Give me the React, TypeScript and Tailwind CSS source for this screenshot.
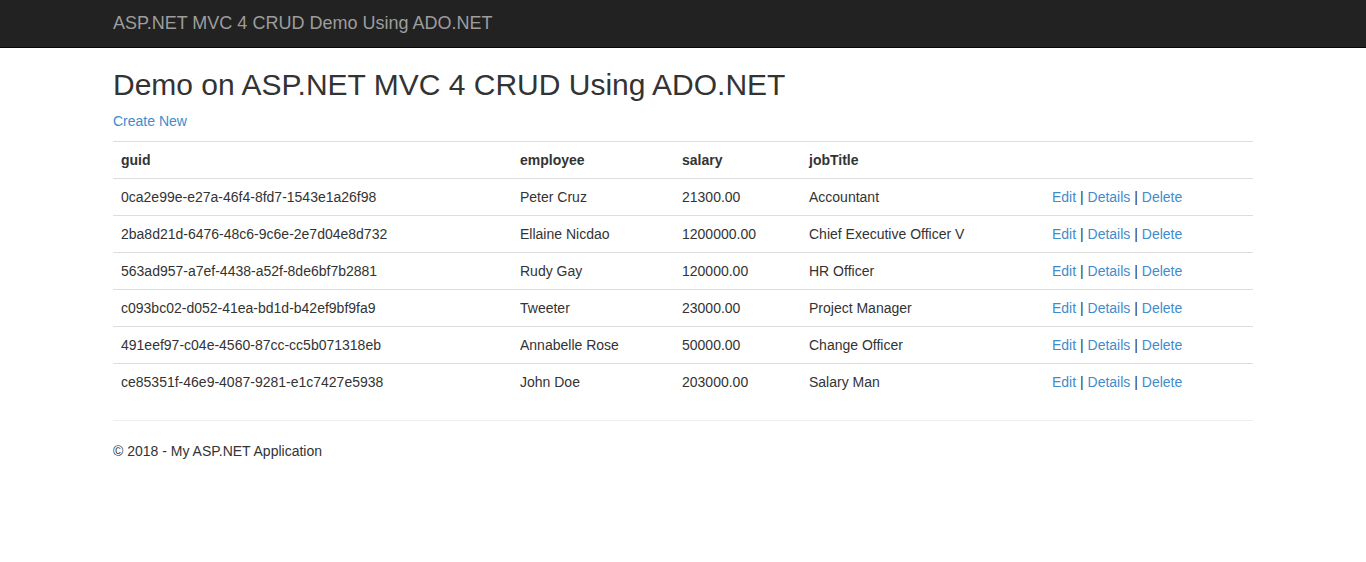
const employees = [
  { guid: "0ca2e99e-e27a-46f4-8fd7-1543e1a26f98", employee: "Peter Cruz", salary: "21300.00", jobTitle: "Accountant" },
  { guid: "2ba8d21d-6476-48c6-9c6e-2e7d04e8d732", employee: "Ellaine Nicdao", salary: "1200000.00", jobTitle: "Chief Executive Officer V" },
  { guid: "563ad957-a7ef-4438-a52f-8de6bf7b2881", employee: "Rudy Gay", salary: "120000.00", jobTitle: "HR Officer" },
  { guid: "c093bc02-d052-41ea-bd1d-b42ef9bf9fa9", employee: "Tweeter", salary: "23000.00", jobTitle: "Project Manager" },
  { guid: "491eef97-c04e-4560-87cc-cc5b071318eb", employee: "Annabelle Rose", salary: "50000.00", jobTitle: "Change Officer" },
  { guid: "ce85351f-46e9-4087-9281-e1c7427e5938", employee: "John Doe", salary: "203000.00", jobTitle: "Salary Man" },
];

export default function App() {
  return (
    <div className="min-h-screen bg-white text-[#333] text-[14px] leading-5 font-['Liberation_Sans',Arial,sans-serif]">
      {/* navbar */}
      <div className="h-12 bg-[#222] border-b border-[#080808]">
        <div className="w-[1170px] mx-auto px-[15px]">
          <a href="#" className="block pt-[13px] text-[18px] leading-5 text-[#9d9d9d]">
            ASP.NET MVC 4 CRUD Demo Using ADO.NET
          </a>
        </div>
      </div>

      <div className="w-[1170px] mx-auto px-[15px]">
        <h2 className="mt-5 mb-[10px] text-[30px] leading-[33px] font-medium">
          Demo on ASP.NET MVC 4 CRUD Using ADO.NET
        </h2>
        <p className="mb-[10px]">
          <a href="#" className="text-[#428bca]">Create New</a>
        </p>

        <table className="w-full border-collapse mb-5 text-left">
          <tbody>
            <tr>
              <th className="w-[399px] p-2 border-t border-[#ddd] font-bold">guid</th>
              <th className="w-[162px] p-2 border-t border-[#ddd] font-bold">employee</th>
              <th className="w-[127px] p-2 border-t border-[#ddd] font-bold">salary</th>
              <th className="w-[243px] p-2 border-t border-[#ddd] font-bold">jobTitle</th>
              <th className="p-2 border-t border-[#ddd]"></th>
            </tr>
            {employees.map((e) => (
              <tr key={e.guid}>
                <td className="p-2 border-t border-[#ddd]">{e.guid}</td>
                <td className="p-2 border-t border-[#ddd]">{e.employee}</td>
                <td className="p-2 border-t border-[#ddd]">{e.salary}</td>
                <td className="p-2 border-t border-[#ddd]">{e.jobTitle}</td>
                <td className="p-2 border-t border-[#ddd]">
                  <a href="#" className="text-[#428bca]">Edit</a> |{" "}
                  <a href="#" className="text-[#428bca]">Details</a> |{" "}
                  <a href="#" className="text-[#428bca]">Delete</a>
                </td>
              </tr>
            ))}
          </tbody>
        </table>

        <hr className="mt-5 mb-5 border-0 border-t border-[#eee]" />
        <footer>
          <p>© 2018 - My ASP.NET Application</p>
        </footer>
      </div>
    </div>
  );
}
